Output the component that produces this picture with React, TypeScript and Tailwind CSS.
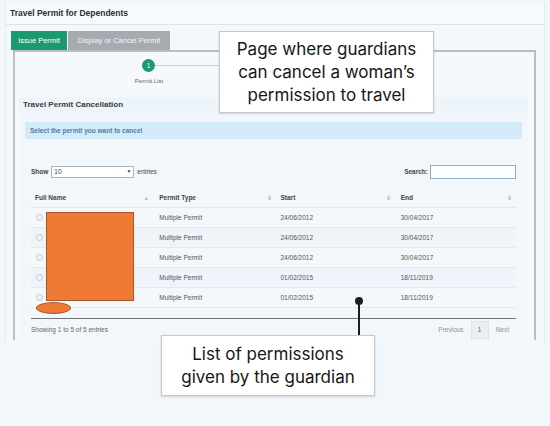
import React from "react";

type Permit = {
  type: string;
  start: string;
  end: string;
};

const permits: Permit[] = [
  { type: "Multiple Permit", start: "24/06/2012", end: "30/04/2017" },
  { type: "Multiple Permit", start: "24/06/2012", end: "30/04/2017" },
  { type: "Multiple Permit", start: "24/06/2012", end: "30/04/2017" },
  { type: "Multiple Permit", start: "01/02/2015", end: "18/11/2019" },
  { type: "Multiple Permit", start: "01/02/2015", end: "18/11/2019" },
];

const SortIcon = ({ active = false }: { active?: boolean }) => (
  <span className="text-[6px] leading-none text-[#b8c2cb]">{active ? "▲" : "⇕"}</span>
);

const Callout = ({ lines, className }: { lines: string[]; className: string }) => (
  <div
    className={
      "absolute flex flex-col items-center justify-center border-[1.5px] border-[#c4c8cc] bg-white font-['Inter',sans-serif] text-[17px] leading-[23px] text-[#161616] shadow-[0_1px_2px_rgba(0,0,0,0.15)] " +
      className
    }
  >
    {lines.map((l) => (
      <span key={l}>{l}</span>
    ))}
  </div>
);

export default function App() {
  return (
    <div className="relative h-[426px] w-[550px] overflow-hidden bg-[#f2f7fb] font-['Liberation_Sans',sans-serif] text-[#333]">
      <div className="mx-[5px] mt-[3px] h-[339px] border-x border-[#e3eaf0] bg-[#f3f8fc]">
        {/* page title */}
        <div className="flex h-[22px] items-center border-b border-[#dae3ea] bg-[#f6fafd] px-[4px]">
          <span className="text-[8.5px] font-bold text-[#2f2f2f]">Travel Permit for Dependents</span>
        </div>

        <div className="px-[5px] pt-[6px]">
          {/* tabs */}
          <div className="flex h-[19px] items-stretch">
            <div className="flex w-[56px] items-center justify-center bg-[#1c9a6f] text-[7.5px] text-white">
              Issue Permit
            </div>
            <div className="ml-px flex w-[102px] items-center justify-center bg-[#a5abb1] text-[7.5px] text-[#f4f4f4]">
              Display or Cancel Permit
            </div>
          </div>

          <div className="ml-[2px] mr-[3px] h-[290px] overflow-hidden border-x-2 border-t-2 border-[#b9bec4] bg-[#f5f9fc]">
            {/* wizard step */}
            <div className="relative h-[45px]">
              <div className="absolute left-[138px] top-[13px] h-px w-[260px] bg-[#c9d2da]" />
              <div className="absolute left-[127px] top-[7px] flex h-[13px] w-[13px] items-center justify-center rounded-full bg-[#1e9a70] text-[6.5px] text-white">
                1
              </div>
              <div className="absolute left-[115px] top-[25px] w-[38px] text-center text-[6px] text-[#666]">
                Permit List
              </div>
            </div>

            {/* cancellation panel */}
            <div className="ml-[4px] mr-[6px] bg-[#eef5fa]">
              <div className="flex h-[16px] items-center px-[4px]">
                <span className="text-[8px] font-bold text-[#3a3a3a]">Travel Permit Cancellation</span>
              </div>
              <div className="bg-[#f1f7fb] px-[6px] pt-[9px]">
                <div className="flex h-[17px] items-center bg-[#d3ebf9] px-[5px]">
                  <span className="text-[6.5px] font-bold text-[#4f7f9c]">Select the permit you want to cancel</span>
                </div>

                <div className="px-[6px] pt-[26px]">
                  {/* table controls */}
                  <div className="flex h-[14px] items-center justify-between">
                    <div className="flex items-center gap-[3px] text-[6.5px] font-bold text-[#444]">
                      <span>Show</span>
                      <div className="flex h-[12px] w-[83px] items-center justify-between border border-[#a9b4bd] bg-white px-[2px] font-normal">
                        <span>10</span>
                        <span className="text-[5px]">▼</span>
                      </div>
                      <span className="font-normal">entries</span>
                    </div>
                    <div className="flex items-center gap-[2px] text-[6.5px] font-bold text-[#444]">
                      <span>Search:</span>
                      <div className="h-[14px] w-[86px] border border-[#8fb0c4] bg-[#fbfeff]" />
                    </div>
                  </div>

                  {/* permits table */}
                  <div className="mt-[9px] border-b-[1.5px] border-[#6f7479] pb-[10px]">
                    <div className="grid h-[20px] grid-cols-4 items-center border-b border-[#dfe6ec] text-[6.5px] font-bold text-[#444]">
                      <div className="flex items-center justify-between pl-[4px] pr-[3px]">
                        <span>Full Name</span>
                        <SortIcon active />
                      </div>
                      <div className="flex items-center justify-between pl-[7px] pr-[2px]">
                        <span>Permit Type</span>
                        <SortIcon />
                      </div>
                      <div className="flex items-center justify-between pl-[7px] pr-[4px]">
                        <span>Start</span>
                        <SortIcon />
                      </div>
                      <div className="flex items-center justify-between pl-[6px] pr-[4px]">
                        <span>End</span>
                        <SortIcon />
                      </div>
                    </div>
                    {permits.map((p, i) => (
                      <div
                        key={i}
                        className={
                          "grid h-[20px] grid-cols-4 items-center border-b border-[#e2e8ee] text-[6.5px] text-[#555] " +
                          (i % 2 === 0 ? "bg-[#f4f8fb]" : "bg-[#eef4f9]")
                        }
                      >
                        <div className="pl-[5px]">
                          <div className="h-[7px] w-[7px] rounded-full border border-[#c3c9ce] bg-[#f3f3f3]" />
                        </div>
                        <div className="pl-[7px]">{p.type}</div>
                        <div className="pl-[7px]">{p.start}</div>
                        <div className="pl-[6px]">{p.end}</div>
                      </div>
                    ))}
                  </div>

                  {/* table footer */}
                  <div className="flex h-[22px] items-center justify-between text-[6.5px] text-[#666]">
                    <span>Showing 1 to 5 of 5 entries</span>
                    <div className="flex items-center gap-[7px]">
                      <span className="text-[#8b949b]">Previous</span>
                      <span className="flex h-[18px] w-[18px] items-center justify-center border border-[#dde3e8] bg-[#e9eef2]">
                        1
                      </span>
                      <span className="pr-[7px] text-[#8b949b]">Next</span>
                    </div>
                  </div>
                </div>
              </div>
            </div>
          </div>
        </div>
      </div>

      {/* name redaction */}
      <div className="absolute left-[46px] top-[212px] h-[89px] w-[88px] border border-[#a9552a] bg-[#ee7a36]" />
      <div className="absolute left-[36px] top-[302px] h-[12px] w-[35px] rounded-[50%] border border-[#a9552a] bg-[#ee7a36]" />

      {/* annotations */}
      <Callout
        className="left-[219px] top-[31px] h-[82px] w-[215px]"
        lines={["Page where guardians", "can cancel a woman’s", "permission to travel"]}
      />
      <div className="absolute left-[355px] top-[297px] h-[8px] w-[8px] rounded-full bg-[#1d1d1d]" />
      <div className="absolute left-[358px] top-[301px] h-[34px] w-[2px] bg-[#1d1d1d]" />
      <Callout
        className="left-[161px] top-[335px] h-[61px] w-[214px]"
        lines={["List of permissions", "given by the guardian"]}
      />
    </div>
  );
}
